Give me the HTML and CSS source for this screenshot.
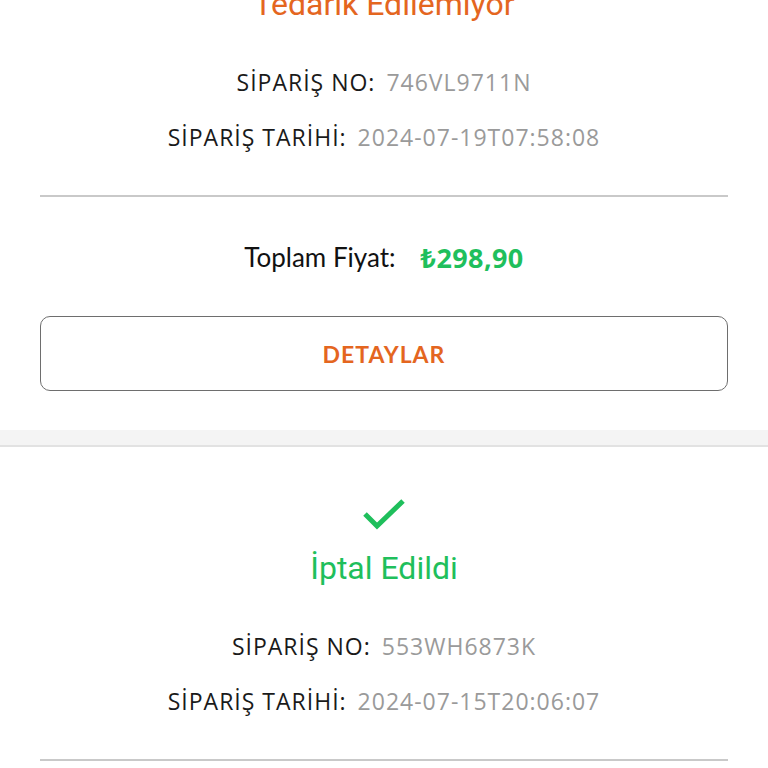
FILE: index.html
```html
<!DOCTYPE html>
<html lang="tr">
<head>
<meta charset="utf-8">
<link rel="stylesheet" href="styles.css">
</head>
<body>
<div class="list">
  <section class="card first">
    <div class="status orange">Tedarik Edilemiyor</div>
    <div class="info"><span class="label">SİPARİŞ NO:</span><span class="value">746VL9711N</span></div>
    <div class="info"><span class="label">SİPARİŞ TARİHİ:</span><span class="value">2024-07-19T07:58:08</span></div>
    <hr class="divider">
    <div class="total"><span class="total-label">Toplam Fiyat:</span><span class="price">₺298,90</span></div>
    <button class="details">DETAYLAR</button>
  </section>
  <div class="gap"></div>
  <section class="card">
    <svg class="check" width="44" height="34" viewBox="0 0 44 34"><path d="M3 16 L15 28 L41 3" fill="none" stroke="#1fbf5c" stroke-width="5"/></svg>
    <div class="status green">İptal Edildi</div>
    <div class="info"><span class="label">SİPARİŞ NO:</span><span class="value">553WH6873K</span></div>
    <div class="info"><span class="label">SİPARİŞ TARİHİ:</span><span class="value">2024-07-15T20:06:07</span></div>
    <hr class="divider">
  </section>
</div>
</body>
</html>
```
FILE: styles.css
```css
* { box-sizing: border-box; }
html, body { margin: 0; padding: 0; background: #fff; }
body { width: 768px; height: 768px; overflow: hidden; font-family: "Open Sans", "Noto Sans", sans-serif; }
.list { margin-top: -14px; }
.card { padding: 0 40px 39px; display: flex; flex-direction: column; align-items: center; background: #fff; }
.card:not(.first) { padding-top: 51px; }
.status { font-family: Roboto, "Noto Sans", sans-serif; font-size: 32px; line-height: 36px; margin-bottom: 32px; }
.orange { color: #e4661f; }
.green { color: #1fbf5c; }
.check { display: block; margin-bottom: 18px; }
.info { display: flex; align-items: center; justify-content: center; gap: 11px; height: 55px; font-size: 23px; letter-spacing: 1px; }
.label { color: #1a1a1a; }
.value { color: #9a9a9a; }
.divider { width: 100%; height: 2px; border: 0; margin: 31px 0 0; background: #c9c9c9; }
.total { margin-top: 40px; height: 40px; display: flex; align-items: center; justify-content: center; gap: 25px; }
.total-label { color: #111; font-family: "Lato", sans-serif; font-size: 26px; }
.price { color: #1fbf5c; font-weight: 700; font-size: 27px; letter-spacing: 0.4px; }
.details { margin-top: 39px; width: 100%; height: 75px; border: 1px solid #6e6e6e; border-radius: 10px; background: #fff; color: #e4661f; font-family: "Lato", sans-serif; font-weight: 700; font-size: 23px; letter-spacing: 1px; }
.gap { height: 17px; background: #f4f4f4; border-bottom: 2px solid #e2e2e2; }
```
